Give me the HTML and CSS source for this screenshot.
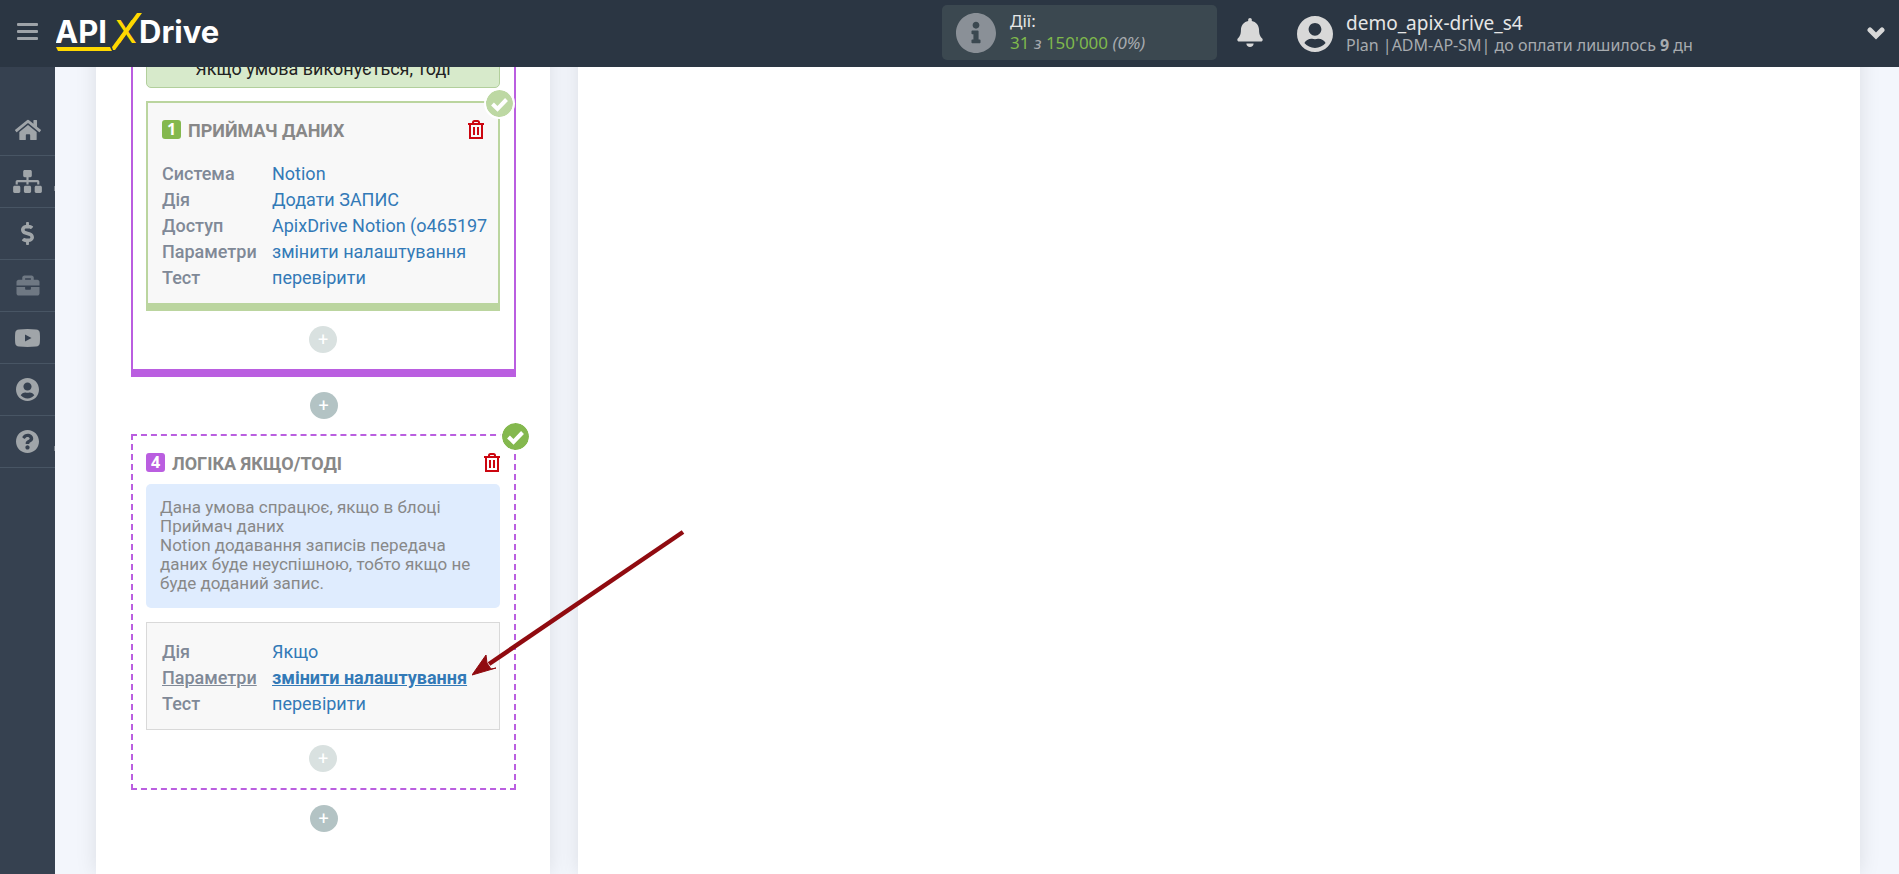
FILE: index.html
```
<!DOCTYPE html>
<html lang="uk">
<head>
  <meta charset="UTF-8">
  <meta name="viewport" content="width=device-width, initial-scale=1.0">
  <title>ApiX-Drive</title>
  <link rel="stylesheet" href="styles.css">
</head>
<body>
  <header class="header">
    <button type="button" class="menu-toggle" aria-label="Меню"><span></span><span></span><span></span></button>
    <a href="#" class="logo" aria-label="ApiXDrive">
      <svg width="170" height="42" viewBox="0 0 170 42">
        <text x="-1" y="32" class="logo-text">API</text>
        <text x="59" y="32" class="logo-x">X</text>
        <text x="83" y="32" class="logo-text">Drive</text>
        <path d="M81 2h5L59 39h-2l-1-3z" fill="#ffd800"/>
        <path d="M0 36h54l2 4H2z" fill="#ffd800"/>
      </svg>
    </a>
    <div class="actions-box">
      <svg class="info-icon" viewBox="8 8 496 496"><path d="M256 8C119.043 8 8 119.083 8 256c0 136.997 111.043 248 248 248s248-111.003 248-248C504 119.083 392.957 8 256 8zm0 110c23.196 0 42 18.804 42 42s-18.804 42-42 42-42-18.804-42-42 18.804-42 42-42zm56 254c0 6.627-5.373 12-12 12h-88c-6.627 0-12-5.373-12-12v-24c0-6.627 5.373-12 12-12h12v-64h-12c-6.627 0-12-5.373-12-12v-24c0-6.627 5.373-12 12-12h64c6.627 0 12 5.373 12 12v100h12c6.627 0 12 5.373 12 12v24z"/></svg>
      <div class="actions-text">
        <div class="top-line">Дії:</div>
        <div class="bottom-line"><span class="green">31</span> <i>з</i> <span class="green">150'000</span> <i>(0%)</i></div>
      </div>
    </div>
    <button type="button" class="bell" aria-label="Сповіщення">
      <svg width="26" height="29" viewBox="0 0 448 512"><path d="M224 512c35.32 0 63.97-28.65 63.97-64H160.03c0 35.35 28.65 64 63.97 64zm215.39-149.71c-19.32-20.76-55.47-51.99-55.47-154.29 0-77.7-54.48-139.9-127.94-155.16V32c0-17.67-14.32-32-31.98-32s-31.98 14.33-31.98 32v20.84C118.56 68.1 64.08 130.3 64.08 208c0 102.3-36.15 133.53-55.47 154.29-6 6.45-8.66 14.16-8.61 21.71.11 16.4 12.98 32 32.1 32h383.8c19.12 0 32-15.6 32.1-32 .05-7.55-2.61-15.27-8.61-21.71z"/></svg>
    </button>
    <div class="user">
      <svg width="36" height="36" viewBox="0 8 496 496"><path d="M248 8C111 8 0 119 0 256s111 248 248 248 248-111 248-248S385 8 248 8zm0 96c48.6 0 88 39.4 88 88s-39.4 88-88 88-88-39.4-88-88 39.4-88 88-88zm0 344c-58.7 0-111.3-26.6-146.5-68.2 18.8-35.4 55.6-59.8 98.5-59.8 2.4 0 4.8.4 7.1 1.1 13 4.2 26.6 6.9 40.9 6.9 14.3 0 28-2.7 40.9-6.9 2.3-.7 4.7-1.1 7.1-1.1 42.9 0 79.7 24.4 98.5 59.8C359.3 421.4 306.7 448 248 448z"/></svg>
      <div>
        <div class="user-name">demo_apix-drive_s4</div>
        <div class="user-plan">Plan |ADM-AP-SM| до оплати лишилось <b>9</b> дн</div>
      </div>
    </div>
    <button type="button" class="user-toggle" aria-label="Профіль">
      <svg width="18" height="14" viewBox="0 0 18 14"><path d="M3 3l6 6 6-6" fill="none" stroke="#d8d8d8" stroke-width="5" stroke-linecap="round"/></svg>
    </button>
  </header>

  <nav class="sidebar">
    <a href="#" aria-label="Головна"><svg width="26" height="24" viewBox="0 0 576 512"><path d="M280.37 148.26L96 300.11V464a16 16 0 0 0 16 16l112.06-.29a16 16 0 0 0 15.92-16V368a16 16 0 0 1 16-16h64a16 16 0 0 1 16 16v95.64a16 16 0 0 0 16 16.05L464 480a16 16 0 0 0 16-16V300L295.67 148.26a12.19 12.19 0 0 0-15.3 0zM571.6 251.47L488 182.56V44.05a12 12 0 0 0-12-12h-56a12 12 0 0 0-12 12v72.61L318.47 43a48 48 0 0 0-61 0L4.34 251.47a12 12 0 0 0-1.6 16.9l25.5 31A12 12 0 0 0 45.15 301l235.22-193.74a12.19 12.19 0 0 1 15.3 0L530.9 301a12 12 0 0 0 16.9-1.6l25.5-31a12 12 0 0 0-1.7-16.93z"/></svg></a>
    <a href="#" class="has-sub" aria-label="Зв'язки"><svg width="29" height="23" viewBox="0 0 640 512"><path d="M128 352H32c-17.67 0-32 14.33-32 32v96c0 17.67 14.33 32 32 32h96c17.67 0 32-14.33 32-32v-96c0-17.67-14.33-32-32-32zm-24-80h192v48h48v-48h192v48h48v-57.59c0-21.17-17.23-38.41-38.41-38.41H344v-64h40c17.67 0 32-14.33 32-32V32c0-17.67-14.33-32-32-32H256c-17.67 0-32 14.33-32 32v96c0 17.67 14.33 32 32 32h40v64H94.41C73.23 224 56 241.23 56 262.41V320h48v-48zm264 80h-96c-17.67 0-32 14.33-32 32v96c0 17.67 14.33 32 32 32h96c17.67 0 32-14.33 32-32v-96c0-17.67-14.33-32-32-32zm240 0h-96c-17.67 0-32 14.33-32 32v96c0 17.67 14.33 32 32 32h96c17.67 0 32-14.33 32-32v-96c0-17.67-14.33-32-32-32z"/></svg></a>
    <a href="#" aria-label="Оплата"><svg width="13" height="23" viewBox="0 0 288 512"><path d="M209.2 233.4l-108-31.6C88.7 198.2 80 186.5 80 173.5c0-16.3 13.2-29.5 29.5-29.5h66.3c12.2 0 24.2 3.7 34.2 10.5 6.1 4.1 14.3 3.1 19.5-2l34.8-34c7.1-6.9 6.1-18.4-1.8-24.5C238 74.8 207.4 64.1 176 64V16c0-8.8-7.2-16-16-16h-32c-8.8 0-16 7.2-16 16v48h-2.5C45.8 64-5.4 118.7.5 183.6c4.2 46.1 39.4 83.6 83.8 96.6l102.5 30c12.5 3.7 21.2 15.3 21.2 28.3 0 16.3-13.2 29.5-29.5 29.5h-66.3C100 368 88 364.3 78 357.5c-6.1-4.1-14.3-3.1-19.5 2l-34.8 34c-7.1 6.9-6.1 18.4 1.8 24.5 24.5 19.2 55.1 29.9 86.5 30v48c0 8.8 7.2 16 16 16h32c8.8 0 16-7.2 16-16v-48.2c46.6-.9 90.3-28.6 105.7-72.7 21.5-61.6-14.6-124.8-72.5-141.7z"/></svg></a>
    <a href="#" class="dim" aria-label="Проєкти"><svg width="24" height="23" viewBox="0 0 512 512"><path d="M320 336c0 8.84-7.16 16-16 16h-96c-8.84 0-16-7.16-16-16v-48H0v144c0 25.6 22.4 48 48 48h416c25.6 0 48-22.4 48-48V288H320v48zm144-208h-80V80c0-25.6-22.4-48-48-48H176c-25.6 0-48 22.4-48 48v48H48c-25.6 0-48 22.4-48 48v80h512v-80c0-25.6-22.4-48-48-48zm-144 0H192V96h128v32z"/></svg></a>
    <a href="#" aria-label="Відео"><svg width="25" height="18" viewBox="0 0 25 18"><path fill-rule="evenodd" d="M4 .5Q12.500-.3 21 .5q3.500.3 3.800 3.500.4 5 0 10-.3 3.200-3.800 3.500-8.500.8-17 0Q.5 17.200.2 14q-.4-5 0-10Q.5.800 4 .5zM10 5.500v7l6.500-3.500z"/></svg></a>
    <a href="#" aria-label="Профіль"><svg width="23" height="23" viewBox="0 8 496 496"><path d="M248 8C111 8 0 119 0 256s111 248 248 248 248-111 248-248S385 8 248 8zm0 96c48.6 0 88 39.4 88 88s-39.4 88-88 88-88-39.4-88-88 39.4-88 88-88zm0 344c-58.7 0-111.3-26.6-146.5-68.2 18.8-35.4 55.6-59.8 98.5-59.8 2.4 0 4.8.4 7.1 1.1 13 4.2 26.6 6.9 40.9 6.9 14.3 0 28-2.7 40.9-6.9 2.3-.7 4.7-1.1 7.1-1.1 42.9 0 79.7 24.4 98.5 59.8C359.3 421.4 306.7 448 248 448z"/></svg></a>
    <a href="#" class="has-sub" aria-label="Допомога"><svg width="23" height="23" viewBox="8 8 496 496"><path d="M504 256c0 136.997-111.043 248-248 248S8 392.997 8 256C8 119.083 119.043 8 256 8s248 111.083 248 248zM262.655 90c-54.497 0-89.255 22.957-116.549 63.758-3.536 5.286-2.353 12.415 2.715 16.258l34.699 26.31c5.205 3.947 12.621 3.008 16.665-2.122 17.864-22.658 30.113-35.797 57.303-35.797 20.429 0 45.698 13.148 45.698 32.958 0 14.976-12.363 22.667-32.534 33.976C247.128 238.528 216 254.941 216 296v4c0 6.627 5.373 12 12 12h56c6.627 0 12-5.373 12-12v-1.333c0-28.462 83.186-29.647 83.186-106.667 0-58.002-60.165-102-116.531-102zM256 338c-25.365 0-46 20.635-46 46 0 25.364 20.635 46 46 46s46-20.636 46-46c0-25.365-20.635-46-46-46z"/></svg></a>
  </nav>

  <main class="content">
    <section class="panel steps">
      <div class="logic">
        <div class="condition">Якщо умова виконується, тоді</div>
        <div class="card receiver">
          <svg class="check light" viewBox="0 0 27 27"><circle cx="13.500" cy="13.500" r="13.500"/><path d="M6.500 14l5 5 9-9.500"/></svg>
          <div class="card-title">
            <span class="num">1</span>
            <h3>ПРИЙМАЧ ДАНИХ</h3>
            <button type="button" class="trash" aria-label="Видалити"><svg width="16" height="19" viewBox="0 0 16 19"><path d="M0 4h16M5 4V2.500Q5 1 6.500 1h3Q11 1 11 2.500V4M2 4v14h12V4M6 7v8M10 7v8"/></svg></button>
          </div>
          <table class="params">
            <tr><th>Система</th><td><a href="#">Notion</a></td></tr>
            <tr><th>Дія</th><td><a href="#">Додати ЗАПИС</a></td></tr>
            <tr><th>Доступ</th><td><a href="#">ApixDrive Notion (o465197</a></td></tr>
            <tr><th>Параметри</th><td><a href="#">змінити налаштування</a></td></tr>
            <tr><th>Тест</th><td><a href="#">перевірити</a></td></tr>
          </table>
        </div>
        <button type="button" class="add inner">+</button>
      </div>

      <button type="button" class="add">+</button>

      <div class="logic dashed">
        <svg class="check" viewBox="0 0 27 27"><circle cx="13.500" cy="13.500" r="13.500"/><path d="M6.500 14l5 5 9-9.500"/></svg>
        <div class="card-title">
          <span class="num purple">4</span>
          <h3>ЛОГІКА ЯКЩО/ТОДІ</h3>
          <button type="button" class="trash" aria-label="Видалити"><svg width="16" height="19" viewBox="0 0 16 19"><path d="M0 4h16M5 4V2.500Q5 1 6.500 1h3Q11 1 11 2.500V4M2 4v14h12V4M6 7v8M10 7v8"/></svg></button>
        </div>
        <p class="note">Дана умова спрацює, якщо в блоці Приймач даних<br>Notion додавання записів передача даних буде неуспішною, тобто якщо не буде доданий запис.</p>
        <div class="card">
          <table class="params">
            <tr><th>Дія</th><td><a href="#">Якщо</a></td></tr>
            <tr class="active"><th>Параметри</th><td><a href="#">змінити налаштування</a></td></tr>
            <tr><th>Тест</th><td><a href="#">перевірити</a></td></tr>
          </table>
          <svg class="arrow" width="214" height="148" viewBox="0 0 214 148">
            <path d="M17 135L211 3" stroke="#900b10" stroke-width="4.500"/>
            <path d="M0 146L14 126l1 8 4 6 5-1z" fill="#900b10" stroke="#900b10"/>
          </svg>
        </div>
        <button type="button" class="add inner">+</button>
      </div>

      <button type="button" class="add">+</button>
    </section>
    <section class="panel workspace"></section>
  </main>
</body>
</html>
```
FILE: styles.css
```
* {
  box-sizing: border-box;
}
body {
  margin: 0;
  background: #f3f6fc;
  font-family: Roboto, sans-serif;
  font-size: 18px;
  color: #222;
}
a {
  color: #337ab7;
  text-decoration: none;
}
button {
  padding: 0;
  border: none;
  background: none;
  cursor: pointer;
}
svg {
  display: block;
}

/* header */
.header {
  position: fixed;
  top: 0;
  left: 0;
  right: 0;
  z-index: 10;
  height: 67px;
  display: flex;
  align-items: center;
  padding: 0 14px 0 17px;
  background: #2b3643;
  font-family: "Noto Sans", sans-serif;
  line-height: 22px;
}
.menu-toggle {
  display: flex;
  flex-direction: column;
  gap: 4px;
  width: 21px;
  margin-top: -4px;
}
.menu-toggle span {
  height: 3px;
  border-radius: 1px;
  background: #9ea3a8;
}
.logo {
  margin: -4px auto 0 18px;
}
.logo-text,
.logo-x {
  font: bold 31px Inter, sans-serif;
  fill: #fff;
}
.logo-x {
  font-weight: 500;
  fill: #ffd800;
}
.actions-box {
  display: flex;
  align-items: center;
  gap: 14px;
  width: 275px;
  height: 55px;
  margin-top: -2px;
  padding-left: 14px;
  border-radius: 5px;
  background: #3b4850;
}
.info-icon {
  width: 40px;
  height: 40px;
  fill: #8a9097;
}
.actions-text {
  padding-bottom: 2px;
}
.top-line {
  font-size: 17px;
  color: #e6e6e6;
}
.bottom-line {
  font-size: 17px;
  color: #a7abaf;
}
.green {
  color: #7fb94c;
}
.bell {
  margin: -2px 34px 0 20px;
}
.bell svg,
.user svg {
  fill: #d8d8d8;
}
.user {
  display: flex;
  align-items: center;
  gap: 13px;
  flex: 0 0 570px;
}
.user-name {
  font-size: 19px;
  color: #e6e6e6;
}
.user-plan {
  font-size: 16px;
  color: #a7abaf;
}

/* sidebar */
.sidebar {
  position: fixed;
  top: 67px;
  bottom: 0;
  left: 0;
  z-index: 5;
  width: 55px;
  padding-top: 37px;
  background: #364150;
}
.sidebar a {
  position: relative;
  display: flex;
  align-items: center;
  justify-content: center;
  height: 52px;
  border-bottom: 1px solid #485564;
}
.sidebar svg {
  fill: #a0a5a9;
}
.sidebar .dim svg {
  fill: #6f7883;
}
.has-sub::after {
  content: "";
  position: absolute;
  right: 0;
  bottom: 16px;
  width: 1px;
  height: 5px;
  background: #7b838c;
}

/* content */
.content {
  display: flex;
  gap: 28px;
  height: 100vh;
  margin-left: 55px;
  padding: 0 39px 0 41px;
  overflow: hidden;
}
.panel {
  background: #fff;
  box-shadow: 0 0 20px rgba(0, 0, 0, 0.1);
}
.steps {
  flex: 0 0 454px;
  display: flex;
  flex-direction: column;
  padding: 0 34px 0 35px;
}
.workspace {
  flex: 1;
}
.logic {
  position: relative;
  display: flex;
  flex-direction: column;
  padding: 44px 14px 16px 13px;
  border: solid #ba5ee0;
  border-width: 0 2px 8px;
}
.logic.dashed {
  padding-top: 17px;
  border: 2px dashed #ba5ee0;
}
.condition {
  height: 44px;
  margin-bottom: 13px;
  border: 1px solid #b2cf9c;
  border-radius: 5px;
  background: #d7eacb;
  line-height: 48px;
  text-align: center;
}
.card {
  position: relative;
  padding: 16px 15px 12px;
  border: 1px solid #d9d9d9;
  background: #f8f8f8;
}
.card.receiver {
  padding: 17px 14px 12px;
  border: 2px solid #bbd59f;
  border-bottom-width: 8px;
}
.card-title {
  display: flex;
  align-items: center;
  gap: 7px;
  height: 19px;
}
.card-title h3 {
  flex: 1;
  margin: 0;
  padding-top: 2px;
  font-size: 18px;
  font-weight: bold;
  line-height: 22px;
  color: #888;
}
.num {
  width: 19px;
  height: 19px;
  border-radius: 3px;
  background: #84b84e;
  font: bold 16px/19px "Open Sans", sans-serif;
  color: #fff;
  text-align: center;
}
.num.purple {
  background: #ba5ee0;
}
.trash svg {
  fill: none;
  stroke: #cc0610;
  stroke-width: 2;
}
.check {
  position: absolute;
  top: -13px;
  right: -15px;
  width: 27px;
  height: 27px;
  border-radius: 50%;
  box-shadow: 0 0 0 2px #fff;
  fill: #84b84e;
}
.check.light {
  fill: #bdd8a3;
}
.check path {
  fill: none;
  stroke: #fff;
  stroke-width: 4;
}
.params {
  width: 100%;
  table-layout: fixed;
  border-collapse: collapse;
  line-height: 26px;
}
.receiver .params {
  margin-top: 22px;
}
.params th,
.params td {
  padding: 0;
  white-space: nowrap;
  text-align: left;
}
.params th {
  width: 110px;
  font-weight: 500;
  color: #808997;
}
.params .active th,
.params .active a {
  text-decoration: underline;
}
.params .active a {
  font-weight: bold;
}
.note {
  margin: 12px 0 14px;
  padding: 14px 14px 15px;
  border-radius: 5px;
  background: #dfecfe;
  font-size: 17px;
  line-height: 19px;
  color: #888;
}
.add {
  align-self: center;
  width: 28px;
  height: 27px;
  margin: 15px 0;
  border-radius: 50%;
  background: #b3c3c4;
  font: 18px/27px Roboto, sans-serif;
  color: #fff;
}
.add.inner {
  margin-bottom: 0;
  background: #d9e1e0;
}

/* pointer to the active row */
.arrow {
  position: absolute;
  top: -94px;
  left: 325px;
  z-index: 2;
}
```
